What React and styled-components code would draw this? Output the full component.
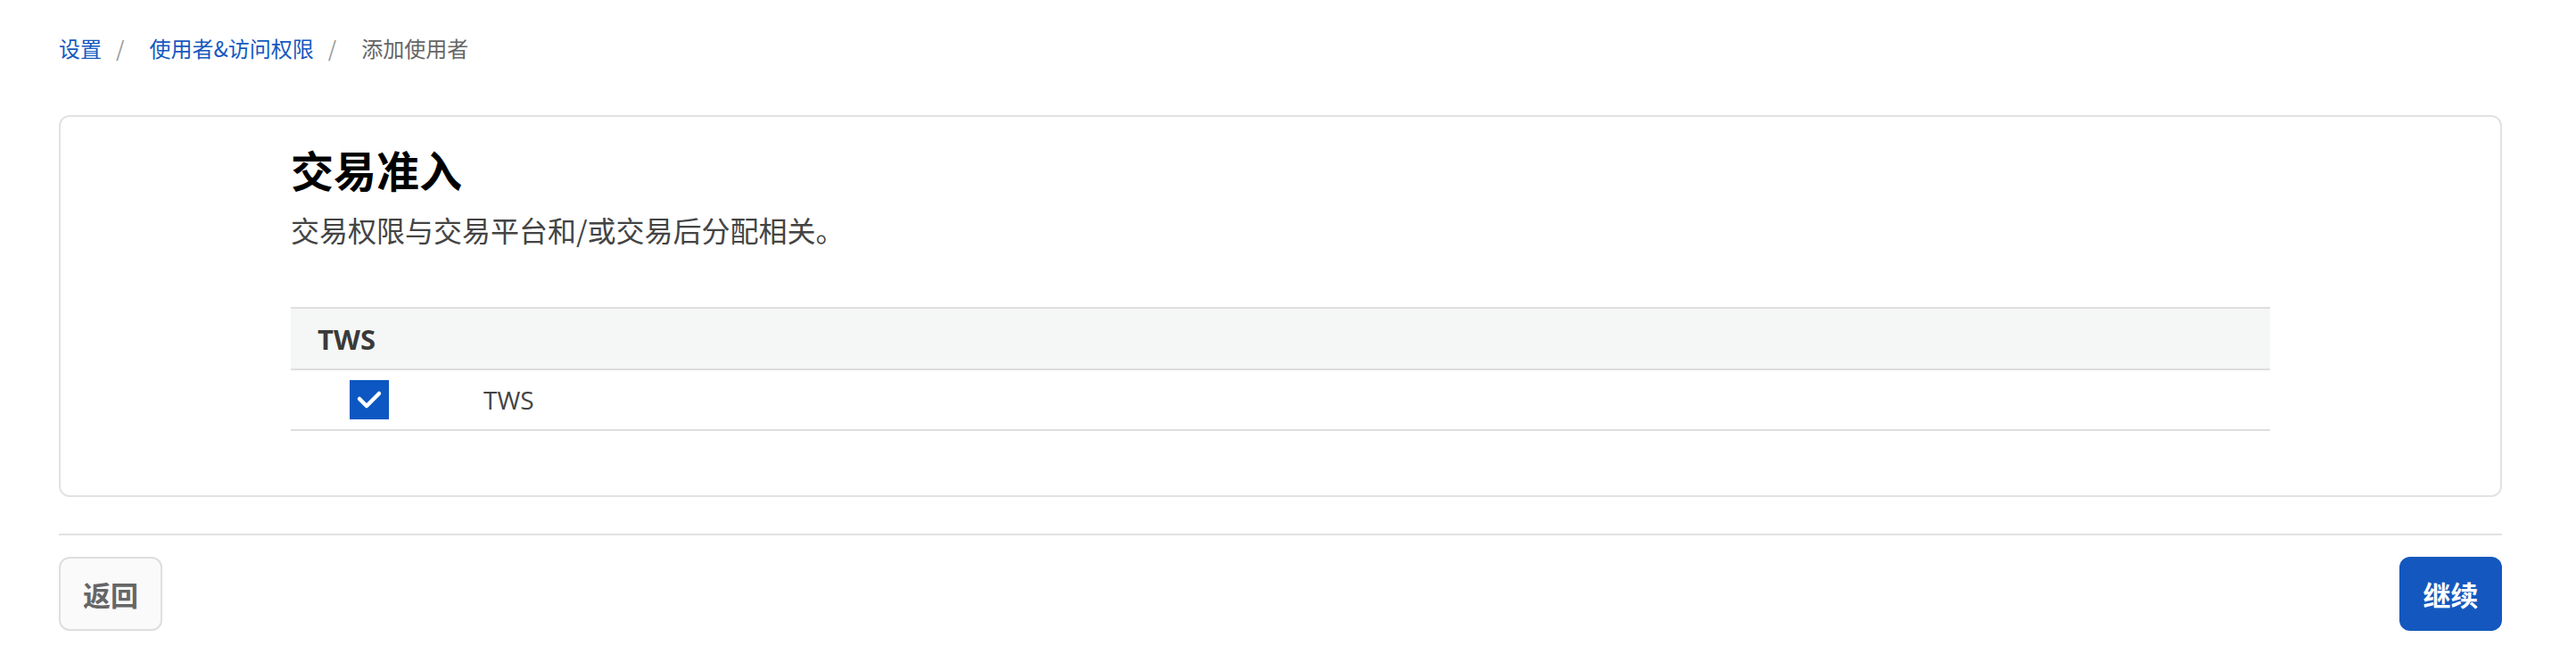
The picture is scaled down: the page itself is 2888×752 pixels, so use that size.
import React from 'react';
import styled, { createGlobalStyle } from 'styled-components';

const GlobalStyle = createGlobalStyle`
  html, body {
    margin: 0;
    padding: 0;
    background: #fff;
  }
  body {
    font-family: "Open Sans", "Noto Sans CJK SC", sans-serif;
    color: #333;
  }
`;

const Page = styled.div`
  padding: 38px 83px 40px 66px;
`;

const Breadcrumb = styled.nav`
  display: flex;
  align-items: center;
  height: 32px;
  font-size: 24px;
  line-height: 32px;
  font-family: "Noto Sans CJK SC", sans-serif;
`;

const Crumb = styled.a`
  color: ${p => (p.$current ? '#666' : '#1558c0')};
  text-decoration: none;
`;

const Sep = styled.span`
  color: #9a9a9a;
  margin: 0 28px 0 16px;
`;

const Card = styled.section`
  margin-top: 59px;
  border: 2px solid #e2e2e2;
  border-radius: 12px;
  padding: 30px 258px 72px;
`;

const Title = styled.h2`
  margin: 0;
  font-family: "Noto Sans CJK SC", sans-serif;
  font-size: 48px;
  line-height: 56px;
  font-weight: 700;
  color: #000;
`;

const Subtitle = styled.p`
  margin: 18px 0 0;
  font-family: "Noto Sans CJK SC", sans-serif;
  font-size: 32px;
  line-height: 44px;
  color: #444;
`;

const Table = styled.div`
  margin-top: 65px;
`;

const HeadRow = styled.div`
  display: flex;
  align-items: center;
  box-sizing: border-box;
  height: 71px;
  padding-left: 30px;
  background: #f5f7f6;
  border-top: 2px solid #dedede;
  border-bottom: 2px solid #dedede;
  font-size: 31px;
  font-weight: 700;
  color: #3a3a3a;
`;

const Row = styled.div`
  display: grid;
  grid-template-columns: 176px 1fr;
  align-items: center;
  box-sizing: border-box;
  height: 68px;
  border-bottom: 2px solid #dedede;
`;

const CheckCell = styled.div`
  display: flex;
  justify-content: center;
`;

const Checkbox = styled.span`
  display: flex;
  width: 44px;
  height: 44px;
  background: #0c57c1;
`;

const CellText = styled.span`
  padding-left: 40px;
  font-size: 28px;
  color: #444;
`;

const Divider = styled.hr`
  margin: 41px 0 0;
  border: none;
  height: 2px;
  background: #e2e2e2;
`;

const Footer = styled.div`
  display: flex;
  justify-content: space-between;
  margin-top: 24px;
`;

const Button = styled.button`
  height: 83px;
  min-width: 115px;
  padding: 0 25px;
  border-radius: 12px;
  font-family: "Noto Sans CJK SC", sans-serif;
  font-size: 31px;
  font-weight: 700;
  cursor: pointer;
  background: ${p => (p.$primary ? '#1458bf' : '#fafafa')};
  color: ${p => (p.$primary ? '#fff' : '#666')};
  border: ${p => (p.$primary ? 'none' : '2px solid #dedede')};
`;

const crumbs = [
  { label: '设置' },
  { label: '使用者&访问权限' },
  { label: '添加使用者', current: true },
];

export default function App() {
  return (
    <>
      <GlobalStyle />
      <Page>
        <Breadcrumb>
          {crumbs.map((c, i) => (
            <React.Fragment key={c.label}>
              <Crumb href={c.current ? undefined : '#'} $current={c.current}>
                {c.label}
              </Crumb>
              {i < crumbs.length - 1 && <Sep>/</Sep>}
            </React.Fragment>
          ))}
        </Breadcrumb>

        <Card>
          <Title>交易准入</Title>
          <Subtitle>交易权限与交易平台和/或交易后分配相关。</Subtitle>
          <Table>
            <HeadRow>TWS</HeadRow>
            <Row>
              <CheckCell>
                <Checkbox>
                  <svg width="44" height="44" viewBox="0 0 44 44">
                    <polyline
                      points="11,21 19,29 33,15"
                      fill="none"
                      stroke="#fff"
                      strokeWidth="4.5"
                      strokeLinecap="round"
                      strokeLinejoin="round"
                    />
                  </svg>
                </Checkbox>
              </CheckCell>
              <CellText>TWS</CellText>
            </Row>
          </Table>
        </Card>

        <Divider />
        <Footer>
          <Button>返回</Button>
          <Button $primary>继续</Button>
        </Footer>
      </Page>
    </>
  );
}
